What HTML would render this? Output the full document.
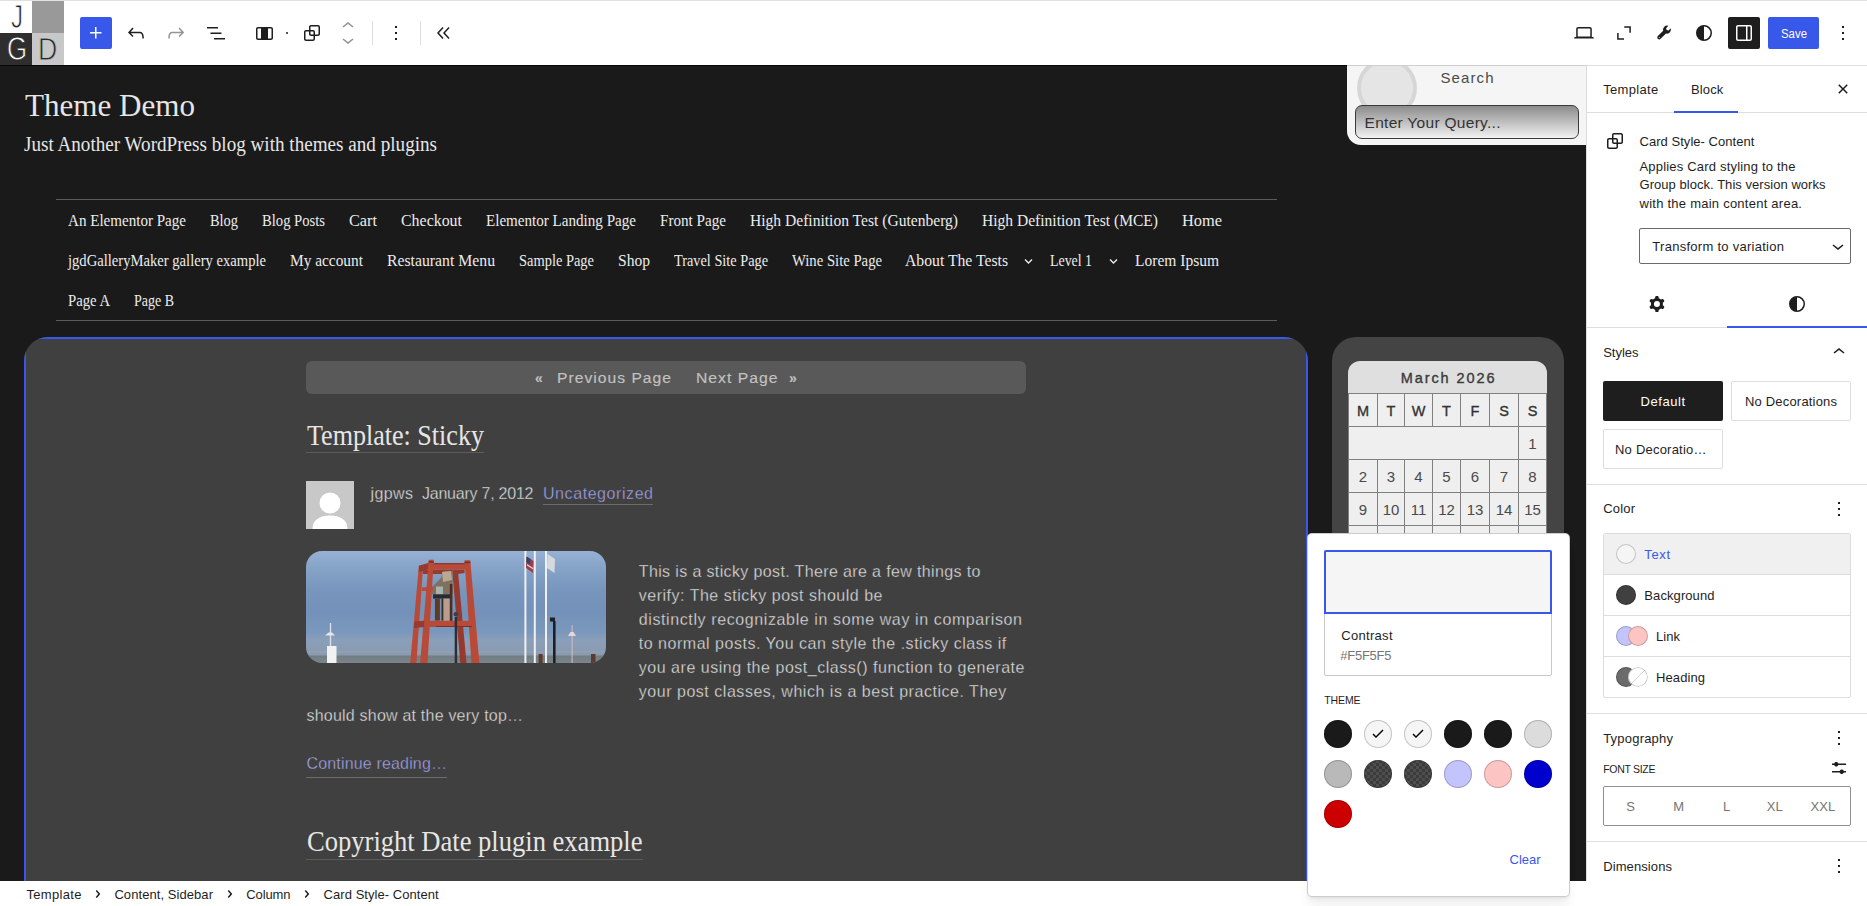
<!DOCTYPE html>
<html><head><meta charset="utf-8"><title>Editor</title>
<style>
html,body{margin:0;padding:0}
body{width:1867px;height:906px;overflow:hidden;position:relative;background:#fff;font-family:"Liberation Sans",sans-serif;-webkit-font-smoothing:antialiased}
#root{position:absolute;left:0;top:0;width:1867px;height:906px;overflow:hidden}
</style></head><body><div id="root">
<div style="position:absolute;left:0px;top:65px;width:1586px;height:816px;background:#1a1a1a"></div>
<div style="position:absolute;left:0px;top:65px;width:1586px;height:1px;background:#070707"></div>
<div style="position:absolute;left:25.00px;top:82px;font:400 32.5px/46px 'Liberation Serif',serif;transform:scaleX(0.9562);transform-origin:0 50%;color:#e6e6e6;white-space:pre;">Theme Demo</div>
<div style="position:absolute;left:24.00px;top:130px;font:400 20px/28px 'Liberation Serif',serif;transform:scaleX(0.9563);transform-origin:0 50%;color:#e6e6e6;white-space:pre;">Just Another WordPress blog with themes and plugins</div>
<div style="position:absolute;left:56px;top:199px;width:1221px;height:1px;background:#5c5c5c"></div>
<div style="position:absolute;left:56px;top:320px;width:1221px;height:1px;background:#5c5c5c"></div>
<div style="position:absolute;left:68.00px;top:208px;font:400 17.5px/24px 'Liberation Serif',serif;transform:scaleX(0.8610);transform-origin:0 50%;color:#ececec;white-space:pre;">An Elementor Page</div>
<div style="position:absolute;left:210.00px;top:208px;font:400 17.5px/24px 'Liberation Serif',serif;transform:scaleX(0.8227);transform-origin:0 50%;color:#ececec;white-space:pre;">Blog</div>
<div style="position:absolute;left:262.00px;top:208px;font:400 17.5px/24px 'Liberation Serif',serif;transform:scaleX(0.8358);transform-origin:0 50%;color:#ececec;white-space:pre;">Blog Posts</div>
<div style="position:absolute;left:349.00px;top:208px;font:400 17.5px/24px 'Liberation Serif',serif;transform:scaleX(0.9293);transform-origin:0 50%;color:#ececec;white-space:pre;">Cart</div>
<div style="position:absolute;left:401.00px;top:208px;font:400 17.5px/24px 'Liberation Serif',serif;transform:scaleX(0.9095);transform-origin:0 50%;color:#ececec;white-space:pre;">Checkout</div>
<div style="position:absolute;left:486.00px;top:208px;font:400 17.5px/24px 'Liberation Serif',serif;transform:scaleX(0.8622);transform-origin:0 50%;color:#ececec;white-space:pre;">Elementor Landing Page</div>
<div style="position:absolute;left:660.00px;top:208px;font:400 17.5px/24px 'Liberation Serif',serif;transform:scaleX(0.8648);transform-origin:0 50%;color:#ececec;white-space:pre;">Front Page</div>
<div style="position:absolute;left:750.00px;top:208px;font:400 17.5px/24px 'Liberation Serif',serif;transform:scaleX(0.8895);transform-origin:0 50%;color:#ececec;white-space:pre;">High Definition Test (Gutenberg)</div>
<div style="position:absolute;left:982.00px;top:208px;font:400 17.5px/24px 'Liberation Serif',serif;transform:scaleX(0.8879);transform-origin:0 50%;color:#ececec;white-space:pre;">High Definition Test (MCE)</div>
<div style="position:absolute;left:1182.00px;top:208px;font:400 17.5px/24px 'Liberation Serif',serif;transform:scaleX(0.9353);transform-origin:0 50%;color:#ececec;white-space:pre;">Home</div>
<div style="position:absolute;left:68.00px;top:248px;font:400 17.5px/24px 'Liberation Serif',serif;transform:scaleX(0.8350);transform-origin:0 50%;color:#ececec;white-space:pre;">jgdGalleryMaker gallery example</div>
<div style="position:absolute;left:290.00px;top:248px;font:400 17.5px/24px 'Liberation Serif',serif;transform:scaleX(0.8785);transform-origin:0 50%;color:#ececec;white-space:pre;">My account</div>
<div style="position:absolute;left:387.00px;top:248px;font:400 17.5px/24px 'Liberation Serif',serif;transform:scaleX(0.8997);transform-origin:0 50%;color:#ececec;white-space:pre;">Restaurant Menu</div>
<div style="position:absolute;left:519.00px;top:248px;font:400 17.5px/24px 'Liberation Serif',serif;transform:scaleX(0.8252);transform-origin:0 50%;color:#ececec;white-space:pre;">Sample Page</div>
<div style="position:absolute;left:618.00px;top:248px;font:400 17.5px/24px 'Liberation Serif',serif;transform:scaleX(0.8893);transform-origin:0 50%;color:#ececec;white-space:pre;">Shop</div>
<div style="position:absolute;left:674.00px;top:248px;font:400 17.5px/24px 'Liberation Serif',serif;transform:scaleX(0.8171);transform-origin:0 50%;color:#ececec;white-space:pre;">Travel Site Page</div>
<div style="position:absolute;left:792.00px;top:248px;font:400 17.5px/24px 'Liberation Serif',serif;transform:scaleX(0.8397);transform-origin:0 50%;color:#ececec;white-space:pre;">Wine Site Page</div>
<div style="position:absolute;left:905.00px;top:248px;font:400 17.5px/24px 'Liberation Serif',serif;transform:scaleX(0.8973);transform-origin:0 50%;color:#ececec;white-space:pre;">About The Tests</div>
<div style="position:absolute;left:1050.00px;top:248px;font:400 17.5px/24px 'Liberation Serif',serif;transform:scaleX(0.7930);transform-origin:0 50%;color:#ececec;white-space:pre;">Level 1</div>
<div style="position:absolute;left:1135.00px;top:248px;font:400 17.5px/24px 'Liberation Serif',serif;transform:scaleX(0.8863);transform-origin:0 50%;color:#ececec;white-space:pre;">Lorem Ipsum</div>
<div style="position:absolute;left:68.00px;top:288px;font:400 17.5px/24px 'Liberation Serif',serif;transform:scaleX(0.8389);transform-origin:0 50%;color:#ececec;white-space:pre;">Page A</div>
<div style="position:absolute;left:134.00px;top:288px;font:400 17.5px/24px 'Liberation Serif',serif;transform:scaleX(0.7990);transform-origin:0 50%;color:#ececec;white-space:pre;">Page B</div>
<svg style="position:absolute;left:1024px;top:258px" width="9" height="7" viewBox="0 0 9 7"><path d="M1 1.500L4.500 5 8 1.500" fill="none" stroke="#ececec" stroke-width="1.400"/></svg>
<svg style="position:absolute;left:1108.5px;top:258px" width="9" height="7" viewBox="0 0 9 7"><path d="M1 1.500L4.500 5 8 1.500" fill="none" stroke="#ececec" stroke-width="1.400"/></svg>
<div style="position:absolute;left:24px;top:337px;width:1284px;height:600px;background:#404040;border-radius:24px;overflow:hidden"><div style="position:absolute;left:0;top:0;right:0;bottom:0;border:2px solid #3858e9"></div></div>
<div style="position:absolute;left:306px;top:361px;width:720px;height:33px;background:#595959;border-radius:6px"></div>
<div style="position:absolute;left:535.00px;top:368px;font:700 14px/20px 'Liberation Sans',sans-serif;letter-spacing:0.714px;color:#c2c2c2;white-space:pre;">«</div>
<div style="position:absolute;left:556.50px;top:368px;font:400 14px/20px 'Liberation Sans',sans-serif;letter-spacing:0.900px;transform:scaleX(1.1192);transform-origin:0 50%;color:#c2c2c2;white-space:pre;-webkit-text-stroke:0.150px #c2c2c2;">Previous Page</div>
<div style="position:absolute;left:695.50px;top:368px;font:400 14px/20px 'Liberation Sans',sans-serif;letter-spacing:0.900px;transform:scaleX(1.1230);transform-origin:0 50%;color:#c2c2c2;white-space:pre;-webkit-text-stroke:0.150px #c2c2c2;">Next Page</div>
<div style="position:absolute;left:789.00px;top:368px;font:700 14px/20px 'Liberation Sans',sans-serif;letter-spacing:0.714px;color:#c2c2c2;white-space:pre;">»</div>
<div style="position:absolute;left:307.00px;top:415px;font:400 29.5px/41px 'Liberation Serif',serif;transform:scaleX(0.8837);transform-origin:0 50%;color:#e6e6e6;white-space:pre;">Template: Sticky</div>
<div style="position:absolute;left:306px;top:452px;width:178px;height:1px;background:#5c5c5c"></div>
<svg style="position:absolute;left:306px;top:481px" width="48" height="48" viewBox="0 0 48 48"><rect width="48" height="48" fill="#c8c8c8"/><circle cx="24" cy="22" r="10.500" fill="#fff"/><path d="M6.500 48c0-9 7-13.500 17.500-13.500S41.500 39 41.500 48z" fill="#fff"/></svg>
<div style="position:absolute;left:370.50px;top:483px;font:400 16px/22px 'Liberation Sans',sans-serif;letter-spacing:0.398px;color:#e0e0e0;white-space:pre;-webkit-text-stroke:0.300px #404040;">jgpws</div>
<div style="position:absolute;left:422.00px;top:483px;font:400 16px/22px 'Liberation Sans',sans-serif;letter-spacing:-0.232px;color:#e0e0e0;white-space:pre;-webkit-text-stroke:0.300px #404040;">January 7, 2012</div>
<div style="position:absolute;left:543.00px;top:483px;font:400 16px/22px 'Liberation Sans',sans-serif;letter-spacing:0.569px;color:#a3a3e6;white-space:pre;-webkit-text-stroke:0.300px #404040;">Uncategorized</div>
<div style="position:absolute;left:543px;top:504px;width:110px;height:1px;background:#6c6c6c"></div>
<div style="position:absolute;left:638.75px;top:561px;font:400 16px/22px 'Liberation Sans',sans-serif;letter-spacing:0.371px;color:#e0e0e0;white-space:pre;-webkit-text-stroke:0.300px #404040;">This is a sticky post. There are a few things to</div>
<div style="position:absolute;left:638.75px;top:585px;font:400 16px/22px 'Liberation Sans',sans-serif;letter-spacing:0.512px;color:#e0e0e0;white-space:pre;-webkit-text-stroke:0.300px #404040;">verify: The sticky post should be</div>
<div style="position:absolute;left:638.75px;top:609px;font:400 16px/22px 'Liberation Sans',sans-serif;letter-spacing:0.610px;color:#e0e0e0;white-space:pre;-webkit-text-stroke:0.300px #404040;">distinctly recognizable in some way in comparison</div>
<div style="position:absolute;left:638.75px;top:633px;font:400 16px/22px 'Liberation Sans',sans-serif;letter-spacing:0.520px;color:#e0e0e0;white-space:pre;-webkit-text-stroke:0.300px #404040;">to normal posts. You can style the .sticky class if</div>
<div style="position:absolute;left:638.75px;top:657px;font:400 16px/22px 'Liberation Sans',sans-serif;letter-spacing:0.528px;color:#e0e0e0;white-space:pre;-webkit-text-stroke:0.300px #404040;">you are using the post_class() function to generate</div>
<div style="position:absolute;left:638.75px;top:681px;font:400 16px/22px 'Liberation Sans',sans-serif;letter-spacing:0.530px;color:#e0e0e0;white-space:pre;-webkit-text-stroke:0.300px #404040;">your post classes, which is a best practice. They</div>
<div style="position:absolute;left:306.50px;top:705px;font:400 16px/22px 'Liberation Sans',sans-serif;letter-spacing:0.212px;color:#e0e0e0;white-space:pre;-webkit-text-stroke:0.300px #404040;">should show at the very top…</div>
<div style="position:absolute;left:306.50px;top:753px;font:400 16px/22px 'Liberation Sans',sans-serif;letter-spacing:0.164px;color:#a3a3e6;white-space:pre;-webkit-text-stroke:0.300px #404040;">Continue reading…</div>
<div style="position:absolute;left:306px;top:777px;width:141px;height:1px;background:#6c6c6c"></div>
<div style="position:absolute;left:307.00px;top:821px;font:400 29.5px/41px 'Liberation Serif',serif;transform:scaleX(0.9000);transform-origin:0 50%;color:#e6e6e6;white-space:pre;">Copyright Date plugin example</div>
<div style="position:absolute;left:306px;top:859px;width:337px;height:1px;background:#5c5c5c"></div>
<svg style="position:absolute;left:306px;top:551px;border-radius:16px" width="300" height="112" viewBox="0 0 300 112"><defs><linearGradient id="sky" x1="0" y1="0" x2="0" y2="1"><stop offset="0" stop-color="#96b1d4"/><stop offset=".15" stop-color="#86a3c8"/><stop offset=".35" stop-color="#7896bd"/><stop offset=".55" stop-color="#7492b9"/><stop offset=".72" stop-color="#7a97bc"/><stop offset=".79" stop-color="#899fba"/><stop offset=".86" stop-color="#8a9db5"/><stop offset=".928" stop-color="#8b9bae"/><stop offset=".938" stop-color="#717d83"/><stop offset="1" stop-color="#7a868b"/></linearGradient></defs><rect width="300" height="112" fill="url(#sky)"/><rect x="0" y="100.500" width="300" height="1" fill="#b5c0cb" opacity=".25"/><polygon points="112.900,14.800 117.200,14.000 110.400,112 104.200,112" fill="#b84a37"/><polygon points="146.200,18.500 151.800,18.500 160.500,112 154.300,112" fill="#96392e"/><polygon points="117,18.500 146.200,18.500 146.200,22.900 117,22.900" fill="#96392e"/><polygon points="126,36 135,27 137,20 146.500,20 146.900,43.300 126,43.300" fill="#80705f"/><polygon points="136,21 145,20 146,29 137,31" fill="#b9a893"/><rect x="130" y="35.500" width="7" height="8" fill="#a7b3ac"/><rect x="127" y="43.300" width="17.500" height="4.300" fill="#272b33"/><rect x="128.900" y="47.600" width="5" height="22" fill="#5e3b26"/><rect x="135.500" y="47.600" width="2" height="22" fill="#3f2a20"/><rect x="137.600" y="47.600" width="6.200" height="22" fill="#b89e8c"/><rect x="143.800" y="33" width="2.600" height="37" fill="#4b2c24"/><polygon points="112.900,14.800 122.800,11.800 122.800,18 112.900,21" fill="#96392e"/><polygon points="151.800,18.500 158.600,18.500 158.600,22 151.800,22.900" fill="#96392e"/><rect x="122.800" y="12.400" width="41.400" height="6.100" fill="#b84a37"/><rect x="127.700" y="12.200" width="31" height="1" fill="#7e2f27"/><polygon points="116,36.500 127,35.800 127,39.500 116,40" fill="#b84a37"/><polygon points="122.800,8.700 127.700,8.700 121.500,112 114.100,112" fill="#b84a37"/><polygon points="158.600,9.300 164.200,9.300 173.400,112 165.400,112" fill="#b84a37"/><rect x="122.600" y="10.200" width="5.400" height="1.600" fill="#7e2f27"/><rect x="158.400" y="10.600" width="6" height="1.600" fill="#7e2f27"/><polygon points="108.500,70.500 118.400,69.800 118.400,76 108,77" fill="#96392e"/><rect x="118.400" y="69.800" width="50.700" height="6.200" fill="#b84a37"/><rect x="130" y="75" width="36" height="1" fill="#7e2f27"/><rect x="148.700" y="66" width="2.400" height="46" fill="#2a2f37"/><circle cx="149.800" cy="63.300" r="2.300" fill="#3a4048"/><rect x="218.4" y="0" width="2" height="112" fill="#f0f0f0"/><rect x="227.8" y="0" width="2" height="112" fill="#f0f0f0"/><rect x="239" y="0" width="2" height="112" fill="#f0f0f0"/><polygon points="220.500,5.500 227.500,10 227,22 220,17" fill="#9a3f4e"/><polygon points="220.500,5.500 224.500,8 224,13.500 220.300,11" fill="#3a3f6b"/><polygon points="221,13 227.300,17 227.200,18.500 221,14.500" fill="#d9d3d8"/><polygon points="241.500,3 249,8 248.500,22 241,17" fill="#d4d9de"/><rect x="247" y="70" width="2.600" height="42" fill="#1d2024"/><rect x="244" y="66.500" width="5" height="4" fill="#1d2024"/><rect x="265.600" y="74" width="1" height="38" fill="#d4bfc4"/><polygon points="262,85 270,85 267.500,81 264.500,81" fill="#e6d6d6"/><rect x="23.800" y="72" width="1.400" height="30" fill="#dcdfe6"/><polygon points="19,84.500 29,84.500 26,81.500 22.500,81.500" fill="#e4e6ea"/><rect x="21" y="95" width="9.500" height="17" fill="#f1f1f1"/><rect x="232.600" y="103" width="4" height="9" fill="#5d3a2e"/><rect x="285" y="103" width="4.500" height="9" fill="#5d3a2e"/></svg>
<div style="position:absolute;left:1347px;top:65px;width:239px;height:80px;background:#f5f5f5;border-bottom-left-radius:14px;border-top:1px solid #cfcfcf;box-sizing:border-box;overflow:hidden"><div style="position:absolute;left:10px;top:-8px;width:60px;height:60px;box-sizing:border-box;border-radius:50%;background:#e5e5e5;border:4.500px solid #d6d6d6"></div><div style="position:absolute;left:8px;top:39px;width:224px;height:34px;box-sizing:border-box;border:1px solid #3a3a3a;border-radius:7px;background:linear-gradient(#8c8c8c,#b9b9b9 45%,#f2f2f2)"></div></div>
<div style="position:absolute;left:1440.50px;top:67px;font:400 15px/21px 'Liberation Sans',sans-serif;letter-spacing:1.094px;color:#4a4a4a;white-space:pre;">Search</div>
<div style="position:absolute;left:1364.50px;top:112px;font:400 15.5px/22px 'Liberation Sans',sans-serif;letter-spacing:0.296px;color:#333;white-space:pre;">Enter Your Query...</div>
<div style="position:absolute;left:1332.25px;top:337px;width:231.5px;height:600px;background:#444;border-radius:24px"></div>
<div style="position:absolute;left:1348px;top:361px;width:199px;height:33px;background:#dfdfdf;border-radius:12px 12px 0 0"></div>
<div style="position:absolute;left:1348px;top:393px;width:199px;height:240px;background:#efefef"></div>
<div style="position:absolute;left:1348px;top:393px;width:199px;height:1px;background:#808080"></div>
<div style="position:absolute;left:1348px;top:426px;width:199px;height:1px;background:#808080"></div>
<div style="position:absolute;left:1348px;top:459px;width:199px;height:1px;background:#808080"></div>
<div style="position:absolute;left:1348px;top:492px;width:199px;height:1px;background:#808080"></div>
<div style="position:absolute;left:1348px;top:525px;width:199px;height:1px;background:#808080"></div>
<div style="position:absolute;left:1348px;top:558px;width:199px;height:1px;background:#808080"></div>
<div style="position:absolute;left:1348px;top:591px;width:199px;height:1px;background:#808080"></div>
<div style="position:absolute;left:1348px;top:393px;width:1px;height:34px;background:#808080"></div>
<div style="position:absolute;left:1348px;top:426px;width:1px;height:34px;background:#808080"></div>
<div style="position:absolute;left:1348px;top:459px;width:1px;height:170px;background:#808080"></div>
<div style="position:absolute;left:1377px;top:393px;width:1px;height:34px;background:#808080"></div>
<div style="position:absolute;left:1377px;top:459px;width:1px;height:170px;background:#808080"></div>
<div style="position:absolute;left:1404px;top:393px;width:1px;height:34px;background:#808080"></div>
<div style="position:absolute;left:1404px;top:459px;width:1px;height:170px;background:#808080"></div>
<div style="position:absolute;left:1432px;top:393px;width:1px;height:34px;background:#808080"></div>
<div style="position:absolute;left:1432px;top:459px;width:1px;height:170px;background:#808080"></div>
<div style="position:absolute;left:1460px;top:393px;width:1px;height:34px;background:#808080"></div>
<div style="position:absolute;left:1460px;top:459px;width:1px;height:170px;background:#808080"></div>
<div style="position:absolute;left:1489px;top:393px;width:1px;height:34px;background:#808080"></div>
<div style="position:absolute;left:1489px;top:459px;width:1px;height:170px;background:#808080"></div>
<div style="position:absolute;left:1518px;top:393px;width:1px;height:34px;background:#808080"></div>
<div style="position:absolute;left:1518px;top:426px;width:1px;height:34px;background:#808080"></div>
<div style="position:absolute;left:1518px;top:459px;width:1px;height:170px;background:#808080"></div>
<div style="position:absolute;left:1546px;top:393px;width:1px;height:34px;background:#808080"></div>
<div style="position:absolute;left:1546px;top:426px;width:1px;height:34px;background:#808080"></div>
<div style="position:absolute;left:1546px;top:459px;width:1px;height:170px;background:#808080"></div>
<div style="position:absolute;left:1400.70px;top:368px;font:400 14.5px/20px 'Liberation Sans',sans-serif;letter-spacing:1.914px;color:#3a3a3a;white-space:pre;-webkit-text-stroke:0.350px #3a3a3a;">March 2026</div>
<div style="position:absolute;left:1356.96px;top:401px;font:400 14.5px/20px 'Liberation Sans',sans-serif;color:#333;white-space:pre;-webkit-text-stroke:0.350px #333;">M</div>
<div style="position:absolute;left:1386.57px;top:401px;font:400 14.5px/20px 'Liberation Sans',sans-serif;color:#333;white-space:pre;-webkit-text-stroke:0.350px #333;">T</div>
<div style="position:absolute;left:1411.66px;top:401px;font:400 14.5px/20px 'Liberation Sans',sans-serif;color:#333;white-space:pre;-webkit-text-stroke:0.350px #333;">W</div>
<div style="position:absolute;left:1442.07px;top:401px;font:400 14.5px/20px 'Liberation Sans',sans-serif;color:#333;white-space:pre;-webkit-text-stroke:0.350px #333;">T</div>
<div style="position:absolute;left:1470.57px;top:401px;font:400 14.5px/20px 'Liberation Sans',sans-serif;color:#333;white-space:pre;-webkit-text-stroke:0.350px #333;">F</div>
<div style="position:absolute;left:1499.16px;top:401px;font:400 14.5px/20px 'Liberation Sans',sans-serif;color:#333;white-space:pre;-webkit-text-stroke:0.350px #333;">S</div>
<div style="position:absolute;left:1527.66px;top:401px;font:400 14.5px/20px 'Liberation Sans',sans-serif;color:#333;white-space:pre;-webkit-text-stroke:0.350px #333;">S</div>
<div style="position:absolute;left:1528.33px;top:433px;font:400 15px/21px 'Liberation Sans',sans-serif;color:#4a4a4a;white-space:pre;">1</div>
<div style="position:absolute;left:1358.83px;top:466px;font:400 15px/21px 'Liberation Sans',sans-serif;color:#4a4a4a;white-space:pre;">2</div>
<div style="position:absolute;left:1386.83px;top:466px;font:400 15px/21px 'Liberation Sans',sans-serif;color:#4a4a4a;white-space:pre;">3</div>
<div style="position:absolute;left:1414.33px;top:466px;font:400 15px/21px 'Liberation Sans',sans-serif;color:#4a4a4a;white-space:pre;">4</div>
<div style="position:absolute;left:1442.33px;top:466px;font:400 15px/21px 'Liberation Sans',sans-serif;color:#4a4a4a;white-space:pre;">5</div>
<div style="position:absolute;left:1470.83px;top:466px;font:400 15px/21px 'Liberation Sans',sans-serif;color:#4a4a4a;white-space:pre;">6</div>
<div style="position:absolute;left:1499.83px;top:466px;font:400 15px/21px 'Liberation Sans',sans-serif;color:#4a4a4a;white-space:pre;">7</div>
<div style="position:absolute;left:1528.33px;top:466px;font:400 15px/21px 'Liberation Sans',sans-serif;color:#4a4a4a;white-space:pre;">8</div>
<div style="position:absolute;left:1358.83px;top:499px;font:400 15px/21px 'Liberation Sans',sans-serif;color:#4a4a4a;white-space:pre;">9</div>
<div style="position:absolute;left:1382.66px;top:499px;font:400 15px/21px 'Liberation Sans',sans-serif;color:#4a4a4a;white-space:pre;">10</div>
<div style="position:absolute;left:1410.71px;top:499px;font:400 15px/21px 'Liberation Sans',sans-serif;color:#4a4a4a;white-space:pre;">11</div>
<div style="position:absolute;left:1438.16px;top:499px;font:400 15px/21px 'Liberation Sans',sans-serif;color:#4a4a4a;white-space:pre;">12</div>
<div style="position:absolute;left:1466.66px;top:499px;font:400 15px/21px 'Liberation Sans',sans-serif;color:#4a4a4a;white-space:pre;">13</div>
<div style="position:absolute;left:1495.66px;top:499px;font:400 15px/21px 'Liberation Sans',sans-serif;color:#4a4a4a;white-space:pre;">14</div>
<div style="position:absolute;left:1524.16px;top:499px;font:400 15px/21px 'Liberation Sans',sans-serif;color:#4a4a4a;white-space:pre;">15</div>
<div style="position:absolute;left:0px;top:0px;width:1867px;height:65px;background:#fff"></div>
<div style="position:absolute;left:0px;top:0px;width:1867px;height:1px;background:#e0e0e0"></div>
<div style="position:absolute;left:0px;top:1px;width:32px;height:32px;background:#fff"></div>
<div style="position:absolute;left:32px;top:1px;width:32px;height:32px;background:#999"></div>
<div style="position:absolute;left:0px;top:33px;width:32px;height:32px;background:#2e2e2e"></div>
<div style="position:absolute;left:32px;top:33px;width:32px;height:32px;background:#c8c8c8"></div>
<div style="position:absolute;left:11.30px;top:-6px;font:400 33px/46px 'Liberation Sans',sans-serif;color:#222;white-space:pre;transform:scaleX(.73);transform-origin:0 0;-webkit-text-stroke:0.800px #fff;">J</div>
<div style="position:absolute;left:6.60px;top:26px;font:400 33px/46px 'Liberation Sans',sans-serif;color:#fff;white-space:pre;transform:scaleX(.78);transform-origin:0 0;-webkit-text-stroke:0.800px #2e2e2e;">G</div>
<div style="position:absolute;left:37.50px;top:27px;font:400 32px/45px 'Liberation Sans',sans-serif;color:#2a2a2a;white-space:pre;transform:scaleX(.835);transform-origin:0 0;-webkit-text-stroke:0.800px #c8c8c8;">D</div>
<div style="position:absolute;left:80px;top:17px;width:32px;height:32px;background:#3858e9;border-radius:2px"></div>
<svg style="position:absolute;left:84px;top:21px" width="24" height="24" viewBox="0 0 24 24" fill="#fff" ><path d="M11 12.5V17.5H12.5V12.5H17.5V11H12.5V6H11V11H6V12.5H11Z"/></svg>
<svg style="position:absolute;left:124px;top:21px" width="24" height="24" viewBox="0 0 24 24" fill="#1e1e1e" ><path d="M18.3 11.7c-.6-.6-1.4-.9-2.3-.9H6.7l2.900-3.300-1.100-1-4.500 5L8.500 16l1-1-2.700-2.700H16c.5 0 .9.2 1.300.5 1 1 1 3.400 1 4.500v.3h1.500v-.2c0-1.500 0-4.300-1.500-5.700z"/></svg>
<svg style="position:absolute;left:164px;top:21px" width="24" height="24" viewBox="0 0 24 24" fill="#949494" ><path d="M15.600 6.500l-1.100 1 2.900 3.300H8c-.9 0-1.700.3-2.300.9-1.400 1.500-1.400 4.200-1.400 5.600v.2h1.500v-.3c0-1.100 0-3.500 1-4.500.3-.3.700-.5 1.300-.5h9.200L14.500 15l1.100 1.100 4.600-4.600-4.600-5z"/></svg>
<svg style="position:absolute;left:204px;top:21px" width="24" height="24" viewBox="0 0 24 24" fill="#1e1e1e" ><path d="M3 6h11v1.500H3V6Zm3.500 5.500h11V13h-11v-1.500ZM21 17H10v1.500h11V17Z"/></svg>
<svg style="position:absolute;left:252px;top:20.75px" width="24" height="24" viewBox="0 0 24 24" fill="#1e1e1e" ><path d="M19 6H6c-1.100 0-2 .9-2 2v9c0 1.100.9 2 2 2h13c1.100 0 2-.9 2-2V8c0-1.100-.9-2-2-2zM6 17.500c-.3 0-.5-.2-.5-.5V8c0-.3.200-.5.500-.5h3v10H6zm13.500-.5c0 .3-.2.5-.5.5h-3v-10h3c.3 0 .5.200.5.5v9z"/></svg>
<div style="position:absolute;left:285.5px;top:32px;width:2px;height:2px;background:#1e1e1e;border-radius:1px"></div>
<svg style="position:absolute;left:299.5px;top:21px" width="24" height="24" viewBox="0 0 24 24" fill="#1e1e1e" ><path d="M18 4h-7c-1.100 0-2 .9-2 2v3H6c-1.100 0-2 .9-2 2v7c0 1.100.9 2 2 2h7c1.100 0 2-.9 2-2v-3h3c1.100 0 2-.9 2-2V6c0-1.100-.9-2-2-2zm-4.500 14c0 .3-.2.5-.5.5H6c-.3 0-.5-.2-.5-.5v-7c0-.3.200-.5.500-.5h3V13c0 1.100.9 2 2 2h2.500v3zm0-4.500H11c-.3 0-.5-.2-.5-.5v-2.500H13c.3 0 .5.200.5.5v2.500zm5-.5c0 .3-.2.5-.5.5h-3V11c0-1.100-.9-2-2-2h-2.500V6c0-.3.200-.5.500-.5h7c.3 0 .5.200.5.5v7z"/></svg>
<svg style="position:absolute;left:335.75px;top:14px" width="24" height="24" viewBox="0 0 24 24" fill="#949494" ><path d="M6.500 12.400L12 8l5.500 4.400-.9 1.200L12 10l-4.500 3.600-1-1.200z"/></svg>
<svg style="position:absolute;left:335.75px;top:28px" width="24" height="24" viewBox="0 0 24 24" fill="#949494" ><path d="M17.500 11.600L12 16l-5.500-4.400.9-1.200L12 14l4.500-3.600 1 1.200z"/></svg>
<div style="position:absolute;left:372px;top:21px;width:1px;height:24px;background:#ddd"></div>
<svg style="position:absolute;left:384.25px;top:21px" width="24" height="24" viewBox="0 0 24 24" fill="#1e1e1e" ><path d="M13 19h-2v-2h2v2zm0-6h-2v-2h2v2zm0-6h-2V5h2v2z"/></svg>
<div style="position:absolute;left:420px;top:21px;width:1px;height:24px;background:#ddd"></div>
<svg style="position:absolute;left:432.25px;top:21px" width="24" height="24" viewBox="0 0 24 24" fill="#1e1e1e" ><path d="M11.600 7l-1.100-1L5 12l5.500 6 1.100-1L7 12l4.600-5zm6 0l-1.100-1-5.500 6 5.500 6 1.100-1-4.600-5 4.600-5z"/></svg>
<svg style="position:absolute;left:1572px;top:21px" width="24" height="24" viewBox="0 0 24 24" fill="#1e1e1e" ><path d="M20.500 16h-.7V8c0-1.100-.9-2-2-2H6.200c-1.100 0-2 .9-2 2v8h-.7c-.8 0-1.500.7-1.500 1.500h20c0-.8-.7-1.500-1.500-1.500zM5.700 8c0-.3.200-.5.500-.5h11.600c.3 0 .5.200.5.5v7.600H5.700V8z"/></svg>
<svg style="position:absolute;left:1612px;top:21px" width="24" height="24" viewBox="0 0 24 24" fill="#1e1e1e" ><path d="M12.250 5.900h5.850v5.900M5.900 12v6.100h6.100" fill="none" stroke="#1e1e1e" stroke-width="1.500"/></svg>
<svg style="position:absolute;left:1652px;top:21px" width="24" height="24" viewBox="0 0 24 24" fill="#1e1e1e" ><path d="M14.103 7.128l2.260-2.260a4 4 0 0 0-5.207 4.804L5.828 15a2 2 0 1 0 2.828 2.828l5.329-5.328a4 4 0 0 0 4.804-5.208l-2.261 2.260-1.912-.512-.513-1.912zm-7.214 9.640a.5.5 0 1 1 .707-.707.5.5 0 0 1-.707.707z"/></svg>
<svg style="position:absolute;left:1692px;top:21px" width="24" height="24" viewBox="0 0 24 24" fill="#1e1e1e" ><path d="M20 12a8 8 0 1 1-16 0 8 8 0 0 1 16 0Zm-1.500 0a6.500 6.500 0 0 0-6.500-6.500v13a6.500 6.500 0 0 0 6.500-6.500Z"/></svg>
<div style="position:absolute;left:1728px;top:17px;width:32px;height:32px;background:#1e1e1e;border-radius:2px"></div>
<svg style="position:absolute;left:1732px;top:21px" width="24" height="24" viewBox="0 0 24 24" fill="#fff" ><path d="M18 4H6c-1.100 0-2 .9-2 2v12c0 1.100.9 2 2 2h12c1.100 0 2-.9 2-2V6c0-1.100-.9-2-2-2zm-4 14.500H6c-.3 0-.5-.2-.5-.5V6c0-.3.200-.5.500-.5h8v13zm4.500-.5c0 .3-.2.5-.5.5h-2.500v-13H18c.3 0 .5.200.5.5v12z"/></svg>
<div style="position:absolute;left:1768px;top:17px;width:51px;height:32px;background:#3858e9;border-radius:2px"></div>
<div style="position:absolute;left:1780.50px;top:25px;font:400 12.5px/18px 'Liberation Sans',sans-serif;transform:scaleX(0.9125);transform-origin:0 50%;color:#fff;white-space:pre;">Save</div>
<svg style="position:absolute;left:1831px;top:21px" width="24" height="24" viewBox="0 0 24 24" fill="#1e1e1e" ><path d="M13 19h-2v-2h2v2zm0-6h-2v-2h2v2zm0-6h-2V5h2v2z"/></svg>
<div style="position:absolute;left:1587px;top:65px;width:280px;height:816px;background:#fff"></div>
<div style="position:absolute;left:1586px;top:65px;width:1px;height:816px;background:#ddd"></div>
<div style="position:absolute;left:1586px;top:65px;width:281px;height:1px;background:#ddd"></div>
<div style="position:absolute;left:1603.20px;top:81px;font:400 13px/18px 'Liberation Sans',sans-serif;letter-spacing:0.336px;color:#1e1e1e;white-space:pre;">Template</div>
<div style="position:absolute;left:1691.00px;top:81px;font:400 13px/18px 'Liberation Sans',sans-serif;letter-spacing:0.127px;color:#1e1e1e;white-space:pre;">Block</div>
<div style="position:absolute;left:1587px;top:112px;width:280px;height:1px;background:#ddd"></div>
<div style="position:absolute;left:1674px;top:111px;width:64px;height:2px;background:#3858e9"></div>
<svg style="position:absolute;left:1831px;top:77px" width="24" height="24" viewBox="0 0 24 24" fill="#1e1e1e" ><path d="M12 13.060l3.712 3.713 1.061-1.060L13.061 12l3.712-3.712-1.060-1.060L12 10.938 8.288 7.227l-1.061 1.060L10.939 12l-3.712 3.712 1.060 1.061L12 13.061z"/></svg>
<svg style="position:absolute;left:1603px;top:129px" width="24" height="24" viewBox="0 0 24 24" fill="#1e1e1e" ><path d="M18 4h-7c-1.100 0-2 .9-2 2v3H6c-1.100 0-2 .9-2 2v7c0 1.100.9 2 2 2h7c1.100 0 2-.9 2-2v-3h3c1.100 0 2-.9 2-2V6c0-1.100-.9-2-2-2zm-4.500 14c0 .3-.2.5-.5.5H6c-.3 0-.5-.2-.5-.5v-7c0-.3.200-.5.500-.5h3V13c0 1.100.9 2 2 2h2.500v3zm0-4.500H11c-.3 0-.5-.2-.5-.5v-2.500H13c.3 0 .5.200.5.5v2.500zm5-.5c0 .3-.2.5-.5.5h-3V11c0-1.100-.9-2-2-2h-2.500V6c0-.3.200-.5.500-.5h7c.3 0 .5.200.5.5v7z"/></svg>
<div style="position:absolute;left:1639.50px;top:133px;font:400 13px/18px 'Liberation Sans',sans-serif;letter-spacing:0.041px;color:#1e1e1e;white-space:pre;">Card Style- Content</div>
<div style="position:absolute;left:1639.50px;top:158px;font:400 13px/18px 'Liberation Sans',sans-serif;letter-spacing:0.191px;color:#1e1e1e;white-space:pre;">Applies Card styling to the</div>
<div style="position:absolute;left:1639.50px;top:176px;font:400 13px/18px 'Liberation Sans',sans-serif;letter-spacing:0.043px;color:#1e1e1e;white-space:pre;">Group block. This version works</div>
<div style="position:absolute;left:1639.50px;top:195px;font:400 13px/18px 'Liberation Sans',sans-serif;letter-spacing:0.246px;color:#1e1e1e;white-space:pre;">with the main content area.</div>
<div style="position:absolute;left:1639px;top:228px;width:212px;height:36px;box-sizing:border-box;border:1px solid #6b6b6b;border-radius:2px;background:#fff"></div>
<div style="position:absolute;left:1652.30px;top:238px;font:400 13px/18px 'Liberation Sans',sans-serif;letter-spacing:0.274px;color:#1e1e1e;white-space:pre;">Transform to variation</div>
<svg style="position:absolute;left:1825.7px;top:233.8px" width="24" height="24" viewBox="0 0 24 24" fill="#1e1e1e" ><path d="M17.500 11.600L12 16l-5.500-4.400.9-1.200L12 14l4.500-3.600 1 1.200z"/></svg>
<svg style="position:absolute;left:1644.8px;top:291.8px" width="24" height="24" viewBox="0 0 24 24" fill="#1e1e1e" ><path fill-rule="evenodd" d="M10.289 4.836A1 1 0 0111.275 4h1.306a1 1 0 01.987.836l.244 1.466c.787.260 1.503.679 2.108 1.218l1.393-.522a1 1 0 011.216.437l.653 1.130a1 1 0 01-.230 1.273l-1.148.944a6.025 6.025 0 010 2.435l1.149.946a1 1 0 01.230 1.272l-.653 1.130a1 1 0 01-1.216.437l-1.394-.522c-.605.540-1.320.958-2.108 1.218l-.244 1.466a1 1 0 01-.987.836h-1.306a1 1 0 01-.986-.836l-.244-1.466a5.995 5.995 0 01-2.108-1.218l-1.394.522a1 1 0 01-1.217-.436l-.653-1.131a1 1 0 01.230-1.272l1.149-.946a6.026 6.026 0 010-2.435l-1.148-.944a1 1 0 01-.230-1.272l.653-1.131a1 1 0 011.217-.437l1.393.522a5.994 5.994 0 012.108-1.218l.244-1.466zM14.929 12a3 3 0 11-6 0 3 3 0 016 0z"/></svg>
<svg style="position:absolute;left:1785px;top:291.8px" width="24" height="24" viewBox="0 0 24 24" fill="#1e1e1e" ><path d="M20 12a8 8 0 1 1-16 0 8 8 0 0 1 16 0Zm-1.500 0a6.500 6.500 0 0 0-6.500-6.500v13a6.500 6.500 0 0 0 6.500-6.500Z"/></svg>
<div style="position:absolute;left:1587px;top:327px;width:280px;height:1px;background:#ddd"></div>
<div style="position:absolute;left:1727px;top:326px;width:140px;height:2px;background:#3858e9"></div>
<div style="position:absolute;left:1603.20px;top:344px;font:400 13px/18px 'Liberation Sans',sans-serif;letter-spacing:-0.020px;color:#1e1e1e;white-space:pre;">Styles</div>
<svg style="position:absolute;left:1827px;top:340.4px" width="24" height="24" viewBox="0 0 24 24" fill="#1e1e1e" ><path d="M6.500 12.400L12 8l5.500 4.400-.9 1.200L12 10l-4.500 3.600-1-1.200z"/></svg>
<div style="position:absolute;left:1603px;top:381px;width:120px;height:40px;background:#1e1e1e;border-radius:2px"></div>
<div style="position:absolute;left:1640.60px;top:393px;font:400 13px/18px 'Liberation Sans',sans-serif;letter-spacing:0.535px;color:#fff;white-space:pre;">Default</div>
<div style="position:absolute;left:1731px;top:381px;width:120px;height:40px;box-sizing:border-box;border:1px solid #ddd;border-radius:2px"></div>
<div style="position:absolute;left:1745.00px;top:393px;font:400 13px/18px 'Liberation Sans',sans-serif;letter-spacing:0.185px;color:#1e1e1e;white-space:pre;">No Decorations</div>
<div style="position:absolute;left:1603px;top:429px;width:120px;height:40px;box-sizing:border-box;border:1px solid #ddd;border-radius:2px"></div>
<div style="position:absolute;left:1615.00px;top:441px;font:400 13px/18px 'Liberation Sans',sans-serif;letter-spacing:0.219px;color:#1e1e1e;white-space:pre;">No Decoratio…</div>
<div style="position:absolute;left:1587px;top:484px;width:280px;height:1px;background:#ddd"></div>
<div style="position:absolute;left:1603.20px;top:500px;font:400 13px/18px 'Liberation Sans',sans-serif;letter-spacing:0.183px;color:#1e1e1e;white-space:pre;">Color</div>
<svg style="position:absolute;left:1827px;top:497px" width="24" height="24" viewBox="0 0 24 24" fill="#1e1e1e" ><path d="M13 19h-2v-2h2v2zm0-6h-2v-2h2v2zm0-6h-2V5h2v2z"/></svg>
<div style="position:absolute;left:1603px;top:533px;width:248px;height:165px;box-sizing:border-box;border:1px solid #ddd;border-radius:2px"></div>
<div style="position:absolute;left:1604px;top:534px;width:246px;height:40px;background:#f0f0f0"></div>
<div style="position:absolute;left:1604px;top:574px;width:246px;height:1px;background:#ddd"></div>
<div style="position:absolute;left:1604px;top:615px;width:246px;height:1px;background:#ddd"></div>
<div style="position:absolute;left:1604px;top:656px;width:246px;height:1px;background:#ddd"></div>
<div style="position:absolute;left:1616px;top:544px;width:20px;height:20px;border-radius:50%;background:#f5f5f5;box-shadow:inset 0 0 0 1px rgba(0,0,0,.2);"></div>
<div style="position:absolute;left:1644.30px;top:546px;font:400 13px/18px 'Liberation Sans',sans-serif;letter-spacing:0.619px;color:#3858e9;white-space:pre;">Text</div>
<div style="position:absolute;left:1616px;top:585px;width:20px;height:20px;border-radius:50%;background:#404040;box-shadow:inset 0 0 0 1px rgba(0,0,0,.2);"></div>
<div style="position:absolute;left:1644.30px;top:587px;font:400 13px/18px 'Liberation Sans',sans-serif;letter-spacing:0.091px;color:#1e1e1e;white-space:pre;">Background</div>
<div style="position:absolute;left:1616px;top:626px;width:20px;height:20px;border-radius:50%;background:#c4c4fc;box-shadow:inset 0 0 0 1px rgba(0,0,0,.2);"></div>
<div style="position:absolute;left:1628.3px;top:626px;width:20px;height:20px;border-radius:50%;background:#fdc4c4;box-shadow:inset 0 0 0 1px rgba(0,0,0,.2);"></div>
<div style="position:absolute;left:1656.00px;top:628px;font:400 13px/18px 'Liberation Sans',sans-serif;letter-spacing:0.050px;color:#1e1e1e;white-space:pre;">Link</div>
<div style="position:absolute;left:1616px;top:667px;width:20px;height:20px;border-radius:50%;background:#6b6b6b;box-shadow:inset 0 0 0 1px rgba(0,0,0,.2);"></div>
<div style="position:absolute;left:1628.3px;top:667px;width:20px;height:20px;border-radius:50%;background:#fff;box-shadow:inset 0 0 0 1px rgba(0,0,0,.2);background:linear-gradient(-45deg,transparent 48%,#d2d2d2 48%,#d2d2d2 52%,transparent 52%) #fff;"></div>
<div style="position:absolute;left:1656.00px;top:669px;font:400 13px/18px 'Liberation Sans',sans-serif;letter-spacing:0.095px;color:#1e1e1e;white-space:pre;">Heading</div>
<div style="position:absolute;left:1587px;top:713px;width:280px;height:1px;background:#ddd"></div>
<div style="position:absolute;left:1603.20px;top:730px;font:400 13px/18px 'Liberation Sans',sans-serif;letter-spacing:0.207px;color:#1e1e1e;white-space:pre;">Typography</div>
<svg style="position:absolute;left:1827px;top:725.7px" width="24" height="24" viewBox="0 0 24 24" fill="#1e1e1e" ><path d="M13 19h-2v-2h2v2zm0-6h-2v-2h2v2zm0-6h-2V5h2v2z"/></svg>
<div style="position:absolute;left:1603.20px;top:762px;font:400 10.5px/15px 'Liberation Sans',sans-serif;letter-spacing:-0.293px;color:#1e1e1e;white-space:pre;">FONT SIZE</div>
<svg style="position:absolute;left:1827px;top:756.3px" width="24" height="24" viewBox="0 0 24 24" fill="#1e1e1e" ><path d="m19 7.500h-7.628c-.3089-.87426-1.142-1.500-2.122-1.500-.97966 0-1.813.62574-2.122 1.500h-2.128v1.500h2.128c.3089.874 1.142 1.500 2.122 1.500.9797 0 1.813-.626 2.122-1.500h7.628z"/><path d="m19 15h-2.128c-.3089-.874-1.142-1.500-2.122-1.500s-1.813.626-2.122 1.500h-7.628v1.500h7.628c.3089.874 1.142 1.500 2.122 1.500s1.813-.626 2.122-1.500h2.128z"/></svg>
<div style="position:absolute;left:1603px;top:786px;width:248px;height:40px;box-sizing:border-box;border:1px solid #8f8f8f;border-radius:2px"></div>
<div style="position:absolute;left:1626.36px;top:798px;font:400 13px/18px 'Liberation Sans',sans-serif;color:#757575;white-space:pre;">S</div>
<div style="position:absolute;left:1673.29px;top:798px;font:400 13px/18px 'Liberation Sans',sans-serif;color:#757575;white-space:pre;">M</div>
<div style="position:absolute;left:1723.08px;top:798px;font:400 13px/18px 'Liberation Sans',sans-serif;color:#757575;white-space:pre;">L</div>
<div style="position:absolute;left:1766.75px;top:798px;font:400 13px/18px 'Liberation Sans',sans-serif;color:#757575;white-space:pre;">XL</div>
<div style="position:absolute;left:1810.61px;top:798px;font:400 13px/18px 'Liberation Sans',sans-serif;color:#757575;white-space:pre;">XXL</div>
<div style="position:absolute;left:1587px;top:841px;width:280px;height:1px;background:#ddd"></div>
<div style="position:absolute;left:1603.20px;top:858px;font:400 13px/18px 'Liberation Sans',sans-serif;letter-spacing:0.098px;color:#1e1e1e;white-space:pre;">Dimensions</div>
<svg style="position:absolute;left:1827px;top:854px" width="24" height="24" viewBox="0 0 24 24" fill="#1e1e1e" ><path d="M13 19h-2v-2h2v2zm0-6h-2v-2h2v2zm0-6h-2V5h2v2z"/></svg>
<div style="position:absolute;left:0px;top:881px;width:1867px;height:25px;background:#fff"></div>
<div style="position:absolute;left:26.40px;top:886px;font:400 13px/18px 'Liberation Sans',sans-serif;letter-spacing:0.336px;color:#1e1e1e;white-space:pre;">Template</div>
<svg style="position:absolute;left:86.1px;top:882.2px" width="24" height="24" viewBox="0 0 24 24" fill="#1e1e1e" ><path d="M10.8622 8.04053L14.2805 12.0286L10.8622 16.0167L9.72327 15.0405L12.3049 12.0286L9.72327 9.01672L10.8622 8.04053Z"/></svg>
<div style="position:absolute;left:114.40px;top:886px;font:400 13px/18px 'Liberation Sans',sans-serif;letter-spacing:0.069px;color:#1e1e1e;white-space:pre;">Content, Sidebar</div>
<svg style="position:absolute;left:218px;top:882.2px" width="24" height="24" viewBox="0 0 24 24" fill="#1e1e1e" ><path d="M10.8622 8.04053L14.2805 12.0286L10.8622 16.0167L9.72327 15.0405L12.3049 12.0286L9.72327 9.01672L10.8622 8.04053Z"/></svg>
<div style="position:absolute;left:246.20px;top:886px;font:400 13px/18px 'Liberation Sans',sans-serif;letter-spacing:-0.079px;color:#1e1e1e;white-space:pre;">Column</div>
<svg style="position:absolute;left:295.1px;top:882.2px" width="24" height="24" viewBox="0 0 24 24" fill="#1e1e1e" ><path d="M10.8622 8.04053L14.2805 12.0286L10.8622 16.0167L9.72327 15.0405L12.3049 12.0286L9.72327 9.01672L10.8622 8.04053Z"/></svg>
<div style="position:absolute;left:323.60px;top:886px;font:400 13px/18px 'Liberation Sans',sans-serif;letter-spacing:0.052px;color:#1e1e1e;white-space:pre;">Card Style- Content</div>
<div style="position:absolute;left:1308px;top:534px;width:261px;height:362px;background:#fff;border-radius:4px;box-shadow:0 0 0 1px #ccc,0 2px 3px rgba(0,0,0,.05),0 4px 5px rgba(0,0,0,.04),0 12px 12px rgba(0,0,0,.03),0 16px 16px rgba(0,0,0,.02)"></div>
<div style="position:absolute;left:1324px;top:550px;width:228px;height:126px;box-sizing:border-box;border:1px solid #c8c8c8;border-radius:2px"></div>
<div style="position:absolute;left:1324px;top:550px;width:228px;height:63.5px;box-sizing:border-box;background:#f5f5f5;border:2px solid #3858e9;border-radius:2px 2px 0 0"></div>
<div style="position:absolute;left:1341.30px;top:627px;font:400 13px/18px 'Liberation Sans',sans-serif;letter-spacing:0.295px;color:#1e1e1e;white-space:pre;">Contrast</div>
<div style="position:absolute;left:1340.30px;top:647px;font:400 13px/18px 'Liberation Sans',sans-serif;letter-spacing:-0.257px;color:#757575;white-space:pre;">#F5F5F5</div>
<div style="position:absolute;left:1324.30px;top:693px;font:400 10.5px/15px 'Liberation Sans',sans-serif;letter-spacing:-0.138px;color:#1e1e1e;white-space:pre;">THEME</div>
<div style="position:absolute;left:1324px;top:720px;width:28px;height:28px;border-radius:50%;background:#1a1a1a;box-shadow:inset 0 0 0 1px rgba(0,0,0,.2)"></div>
<div style="position:absolute;left:1364px;top:720px;width:28px;height:28px;border-radius:50%;background:#f5f5f5;box-shadow:inset 0 0 0 1px rgba(0,0,0,.2)"></div>
<svg style="position:absolute;left:1366px;top:722px" width="24" height="24" viewBox="0 0 24 24" fill="#000" ><path d="M16.500 7.500 10 13.900l-2.500-2.400-1 1 3.500 3.600 7.500-7.600z"/></svg>
<div style="position:absolute;left:1404px;top:720px;width:28px;height:28px;border-radius:50%;background:#f5f5f5;box-shadow:inset 0 0 0 1px rgba(0,0,0,.2)"></div>
<svg style="position:absolute;left:1406px;top:722px" width="24" height="24" viewBox="0 0 24 24" fill="#000" ><path d="M16.500 7.500 10 13.900l-2.500-2.400-1 1 3.500 3.600 7.500-7.600z"/></svg>
<div style="position:absolute;left:1444px;top:720px;width:28px;height:28px;border-radius:50%;background:#1a1a1a;box-shadow:inset 0 0 0 1px rgba(0,0,0,.2)"></div>
<div style="position:absolute;left:1484px;top:720px;width:28px;height:28px;border-radius:50%;background:#1a1a1a;box-shadow:inset 0 0 0 1px rgba(0,0,0,.2)"></div>
<div style="position:absolute;left:1524px;top:720px;width:28px;height:28px;border-radius:50%;background:#dcdcdc;box-shadow:inset 0 0 0 1px rgba(0,0,0,.2)"></div>
<div style="position:absolute;left:1324px;top:760px;width:28px;height:28px;border-radius:50%;background:#b9b9b9;box-shadow:inset 0 0 0 1px rgba(0,0,0,.2)"></div>
<div style="position:absolute;left:1364px;top:760px;width:28px;height:28px;border-radius:50%;background:repeating-conic-gradient(#3b3b3b 0 25%,#4e4e4e 0 50%) 0 0/6px 6px;box-shadow:inset 0 0 0 1px rgba(0,0,0,.2)"></div>
<div style="position:absolute;left:1404px;top:760px;width:28px;height:28px;border-radius:50%;background:repeating-conic-gradient(#3b3b3b 0 25%,#4e4e4e 0 50%) 0 0/6px 6px;box-shadow:inset 0 0 0 1px rgba(0,0,0,.2)"></div>
<div style="position:absolute;left:1444px;top:760px;width:28px;height:28px;border-radius:50%;background:#c4c4fc;box-shadow:inset 0 0 0 1px rgba(0,0,0,.2)"></div>
<div style="position:absolute;left:1484px;top:760px;width:28px;height:28px;border-radius:50%;background:#fdc4c4;box-shadow:inset 0 0 0 1px rgba(0,0,0,.2)"></div>
<div style="position:absolute;left:1524px;top:760px;width:28px;height:28px;border-radius:50%;background:#0000cc;box-shadow:inset 0 0 0 1px rgba(0,0,0,.2)"></div>
<div style="position:absolute;left:1324px;top:800px;width:28px;height:28px;border-radius:50%;background:#cc0000;box-shadow:inset 0 0 0 1px rgba(0,0,0,.2)"></div>
<div style="position:absolute;left:1509.50px;top:851px;font:400 13px/18px 'Liberation Sans',sans-serif;letter-spacing:0.008px;color:#3858e9;white-space:pre;">Clear</div>
</div></body></html>
